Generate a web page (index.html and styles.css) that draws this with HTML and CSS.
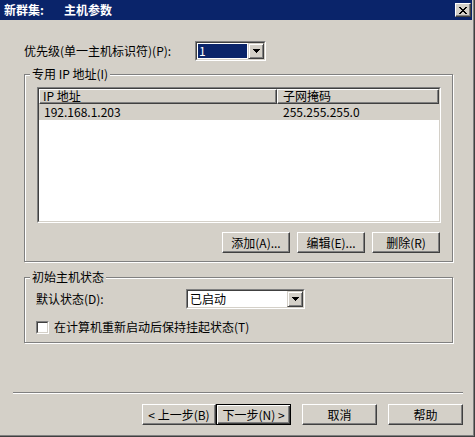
FILE: index.html
```html
<!DOCTYPE html>
<html lang="zh-CN">
<head>
<meta charset="utf-8">
<title>新群集: 主机参数</title>
<link rel="stylesheet" href="styles.css">
</head>
<body>
<div class="window">
  <div class="titlebar">
    <span class="title-a">新群集:</span><span class="title-b">主机参数</span>
    <span class="close">
      <svg width="8" height="7" viewBox="0 0 8 7" shape-rendering="crispEdges"><rect x="0" y="0" width="2" height="1"/><rect x="6" y="0" width="2" height="1"/><rect x="1" y="1" width="2" height="1"/><rect x="5" y="1" width="2" height="1"/><rect x="2" y="2" width="4" height="1"/><rect x="3" y="3" width="2" height="1"/><rect x="2" y="4" width="4" height="1"/><rect x="1" y="5" width="2" height="1"/><rect x="5" y="5" width="2" height="1"/><rect x="0" y="6" width="2" height="1"/><rect x="6" y="6" width="2" height="1"/></svg>
    </span>
  </div>

  <div class="content">
    <div class="prio-row">
      <span class="prio-label">优先级(单一主机标识符)(P):</span>
      <div class="combo combo-prio">
        <div class="combo-in">
          <div class="combo-field"><span class="combo-sel">1</span></div>
          <span class="drop-btn"><svg width="7" height="4" viewBox="0 0 7 4" shape-rendering="crispEdges"><rect x="0" y="0" width="7" height="1"/><rect x="1" y="1" width="5" height="1"/><rect x="2" y="2" width="3" height="1"/><rect x="3" y="3" width="1" height="1"/></svg></span>
        </div>
      </div>
    </div>

    <div class="group group-ip">
      <div class="legend">专用 IP 地址(I)</div>
      <div class="listview">
        <div class="listview-in">
          <div class="lv-header">
            <div class="lv-hcell lv-col1">IP 地址</div>
            <div class="lv-hcell lv-col2">子网掩码</div>
          </div>
          <div class="lv-row">
            <div class="lv-cell lv-c1">192.168.1.203</div>
            <div class="lv-cell lv-c2">255.255.255.0</div>
          </div>
        </div>
      </div>
      <div class="ip-buttons">
        <button class="btn btn-small">添加(A)...</button>
        <button class="btn btn-small">编辑(E)...</button>
        <button class="btn btn-small">删除(R)</button>
      </div>
    </div>

    <div class="group group-state">
      <div class="legend">初始主机状态</div>
      <div class="state-row">
        <span class="state-label">默认状态(D):</span>
        <div class="combo combo-state">
          <div class="combo-in">
            <div class="combo-field"><span class="combo-text">已启动</span></div>
            <span class="drop-btn"><svg width="7" height="4" viewBox="0 0 7 4" shape-rendering="crispEdges"><rect x="0" y="0" width="7" height="1"/><rect x="1" y="1" width="5" height="1"/><rect x="2" y="2" width="3" height="1"/><rect x="3" y="3" width="1" height="1"/></svg></span>
          </div>
        </div>
      </div>
      <div class="check-row">
        <span class="checkbox"><span class="checkbox-in"></span></span>
        <span class="check-label">在计算机重新启动后保持挂起状态(T)</span>
      </div>
    </div>
  </div>

  <div class="separator"></div>

  <div class="footer">
    <button class="btn btn-back">&lt; 上一步(B)</button>
    <button class="btn btn-next btn-default">下一步(N) &gt;</button>
    <button class="btn btn-wide btn-gap">取消</button>
    <button class="btn btn-wide btn-gap">帮助</button>
  </div>
</div>
</body>
</html>
```

FILE: styles.css
```css
html, body {
  margin: 0;
  padding: 0;
  background: #d4d0c8;
}

.window {
  width: 475px;
  height: 437px;
  box-sizing: border-box;
  background: #d4d0c8;
  border-right: 1px solid #404040;
  border-bottom: 1px solid #404040;
  box-shadow: inset -1px -1px #808080;
  font-family: "Noto Sans CJK SC", sans-serif;
  font-size: 12px;
  line-height: 14px;
  color: #000;
  overflow: hidden;
}

/* Title bar */
.titlebar {
  height: 20px;
  margin-right: 2px;
  background: #0a246a;
  color: #fff;
  font-weight: bold;
  display: flex;
  align-items: center;
  padding-left: 4px;
}

.title-a {
  display: inline-block;
  width: 60px;
}

.close {
  margin-left: auto;
  margin-right: 1px;
  width: 16px;
  height: 14px;
  box-sizing: border-box;
  background: #d4d0c8;
  border: 1px solid;
  border-color: #fff #404040 #404040 #fff;
  box-shadow: inset -1px -1px #808080;
  display: flex;
  align-items: center;
  justify-content: center;
}

.close svg {
  fill: #000;
  display: block;
  margin-left: -1px;
}

/* Content */
.content {
  padding-left: 24px;
}

.prio-row {
  margin-top: 21px;
  height: 20px;
  display: flex;
  align-items: center;
}

.prio-label {
  width: 171px;
}

/* Combo boxes */
.combo {
  height: 20px;
  box-sizing: border-box;
  border: 1px solid;
  border-color: #808080 #fff #fff #808080;
}

.combo-in {
  height: 100%;
  box-sizing: border-box;
  border: 1px solid;
  border-color: #404040 #d4d0c8 #d4d0c8 #404040;
  background: #fff;
  display: flex;
}

.combo-field {
  flex: 1;
  display: flex;
  align-items: center;
  padding: 1px;
}

.combo-sel {
  flex: 1;
  align-self: stretch;
  background: #0a246a;
  color: #fff;
  padding-left: 1px;
  line-height: 14px;
}

.combo-text {
  padding-left: 1px;
}

.drop-btn {
  width: 16px;
  box-sizing: border-box;
  background: #d4d0c8;
  border: 1px solid;
  border-color: #d4d0c8 #404040 #404040 #d4d0c8;
  box-shadow: inset 1px 1px #fff, inset -1px -1px #808080;
  display: flex;
  align-items: center;
  justify-content: center;
}

.drop-btn svg {
  fill: #000;
  display: block;
}

.combo-prio {
  width: 71px;
}

.combo-state {
  width: 119px;
}

/* Group boxes */
.group {
  width: 429px;
  box-sizing: border-box;
  border: 1px solid #808080;
  box-shadow: inset 1px 1px #fff, 1px 1px #fff;
}

.legend {
  width: fit-content;
  margin-top: -8px;
  padding: 0 2px;
  background: #d4d0c8;
  line-height: 14px;
}

.group-ip {
  margin-top: 13px;
  padding: 0 11px 8px 12px;
}

.group-ip .legend {
  margin-left: -7px;
}

.group-state {
  margin-top: 15px;
  padding: 0 11px 8px 11px;
}

.group-state .legend {
  margin-left: -6px;
}

/* List view */
.listview {
  margin-top: 6px;
  width: 404px;
  height: 136px;
  box-sizing: border-box;
  border: 1px solid;
  border-color: #808080 #fff #fff #808080;
}

.listview-in {
  height: 100%;
  box-sizing: border-box;
  border: 1px solid;
  border-color: #404040 #d4d0c8 #d4d0c8 #404040;
  background: #fff;
}

.lv-header {
  display: flex;
  height: 15px;
}

.lv-hcell {
  box-sizing: border-box;
  height: 15px;
  background: #d4d0c8;
  border: 1px solid;
  border-color: #fff #404040 #404040 #fff;
  box-shadow: inset -1px -1px #808080;
  line-height: 12px;
  padding-left: 3px;
  white-space: nowrap;
}

.lv-col1 {
  width: 238px;
}

.lv-col2 {
  width: 162px;
  padding-left: 5px;
}

.lv-row {
  display: flex;
  height: 16px;
  background: #d4d0c8;
}

.lv-cell {
  line-height: 16px;
  white-space: nowrap;
}

.lv-c1 {
  width: 238px;
  box-sizing: border-box;
  padding-left: 5px;
}

.lv-c2 {
  padding-left: 6px;
}

/* Buttons */
.btn {
  font: inherit;
  color: #000;
  margin: 0;
  padding: 0;
  height: 21px;
  line-height: 19px;
  box-sizing: border-box;
  background: #d4d0c8;
  border: 1px solid;
  border-color: #fff #404040 #404040 #fff;
  box-shadow: inset -1px -1px #808080;
  text-align: center;
  white-space: nowrap;
}

.ip-buttons {
  margin-top: 9px;
  display: flex;
  justify-content: flex-end;
  gap: 7px;
  padding-right: 1px;
}

.btn-small {
  width: 68px;
}

.btn-back {
  width: 74px;
}

.btn-next {
  width: 75px;
}

.btn-wide {
  width: 75px;
}

.btn-gap {
  margin-left: 11px;
}

.btn-default {
  border: 1px solid #000;
  box-shadow: inset 1px 1px #fff, inset -1px -1px #404040, inset -2px -2px #808080;
}

/* Initial state group */
.state-row {
  margin-top: 5px;
  height: 20px;
  display: flex;
  align-items: center;
}

.state-label {
  width: 150px;
}

.check-row {
  margin-top: 11px;
  height: 14px;
  display: flex;
  align-items: center;
}

.checkbox {
  width: 13px;
  height: 13px;
  box-sizing: border-box;
  border: 1px solid;
  border-color: #808080 #fff #fff #808080;
}

.checkbox-in {
  display: block;
  height: 100%;
  box-sizing: border-box;
  border: 1px solid;
  border-color: #404040 #d4d0c8 #d4d0c8 #404040;
  background: #fff;
}

.check-label {
  margin-left: 5px;
}

/* Separator and footer */
.separator {
  margin-top: 49px;
  margin-left: 13px;
  width: 450px;
  height: 0;
  border-top: 1px solid #808080;
  border-bottom: 1px solid #fff;
}

.footer {
  margin-top: 10px;
  display: flex;
  justify-content: flex-end;
  padding-right: 11px;
}
```
